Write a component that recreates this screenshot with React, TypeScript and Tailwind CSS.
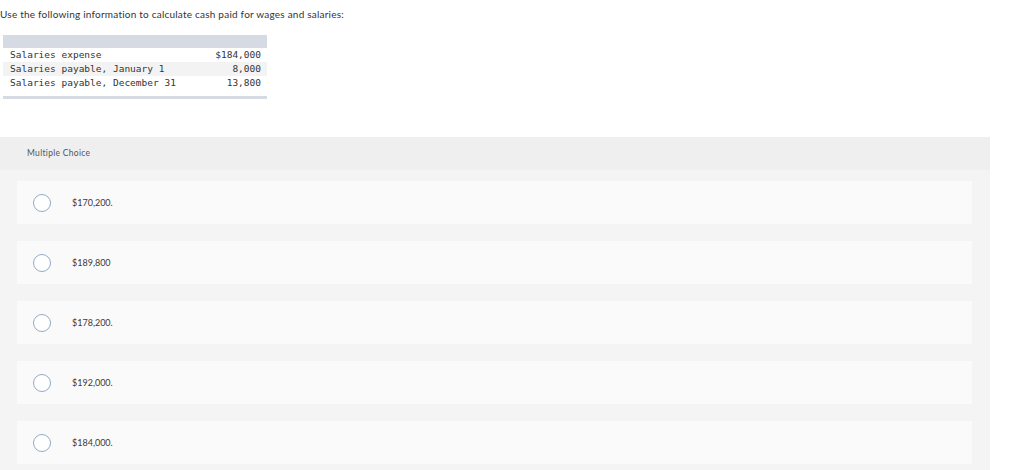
import React from "react";

const rows = [
    {label: "Salaries expense", value: "$184,000"},
    {label: "Salaries payable, January 1", value: "8,000"},
    {label: "Salaries payable, December 31", value: "13,800"},
]

const choices = ["$170,200.", "$189,800", "$178,200.", "$192,000.", "$184,000."]

const Choice = ({text}: { text: string }) => {
    return (
        <div className="flex flex-row items-center h-[43px] bg-[#fafafa] pl-[16px]">
            <span className="w-[18px] h-[18px] rounded-full border-[1.5px] border-[#93abc7] bg-white"/>
            <span className="ml-[21px] text-[9px] text-[#3a3a3a] font-['Lato',sans-serif]">{text}</span>
        </div>
    )
}

export default function App() {
    return (
        <div className="w-[1024px] h-[470px] bg-white overflow-hidden">
            <p className="pt-[8px] text-[10px] leading-[12px] text-[#333] tracking-[0.22px] font-['Lato',sans-serif]">
                Use the following information to calculate cash paid for wages and salaries:
            </p>

            <div className="ml-[3px] mt-[15px] w-[264px] border-b-[3px] border-[#d5dae3]">
                <div className="h-[13px] bg-[#d5dae3]"/>
                <div className="pb-[6px] font-['DejaVu_Sans_Mono',monospace] text-[9.5px] leading-[14px] text-[#333]">
                    {rows.map((row, i) => (
                        <div key={row.label}
                             className={`flex flex-row justify-between pl-[7px] pr-[6px] ${i === 1 ? "bg-[#f3f3f3]" : ""}`}>
                            <span>{row.label}</span>
                            <span>{row.value}</span>
                        </div>
                    ))}
                </div>
            </div>

            <div className="mt-[38px] w-[990px] bg-[#f4f4f4] pb-[20px]">
                <div className="h-[33px] bg-[#efefef] flex items-center pl-[27px]">
                    <span className="text-[8.5px] text-[#555] tracking-[0.3px] font-['Lato',sans-serif]">Multiple Choice</span>
                </div>
                <div className="flex flex-col gap-[17px] pt-[11px] pl-[17px] pr-[18px]">
                    {choices.map((c) => <Choice key={c} text={c}/>)}
                </div>
            </div>
        </div>
    )
}
